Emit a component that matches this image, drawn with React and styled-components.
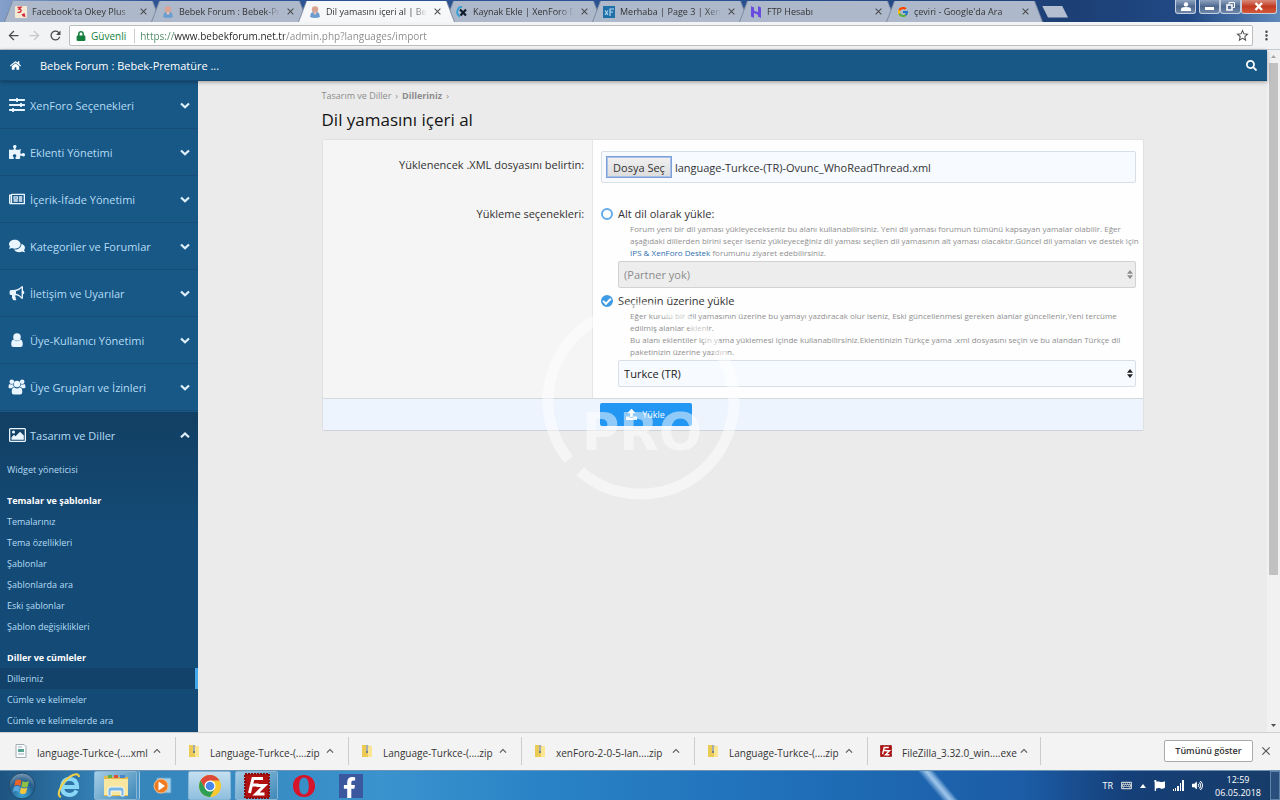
import React, { useRef } from 'react';
import styled, { createGlobalStyle, css } from 'styled-components';
import {
    FaHome, FaSearch, FaSlidersH, FaPuzzlePiece, FaRegNewspaper, FaComments,
    FaUpload, FaLock, FaFacebookF, FaVolumeUp, FaFlag, FaKeyboard,
} from 'react-icons/fa';
import { MdArrowBack, MdArrowForward, MdRefresh, MdStarBorder, MdMoreVert, MdClose, MdKeyboardArrowUp } from 'react-icons/md';
import { FcGoogle } from 'react-icons/fc';

const tabs = [
    { title: "Facebook'ta Okey Plus", icon: 'okey' },
    { title: 'Bebek Forum : Bebek-Prematüre', icon: 'baby' },
    { title: 'Dil yamasını içeri al | Bebek Forum', icon: 'baby', active: true },
    { title: 'Kaynak Ekle | XenForo Destek', icon: 'xen' },
    { title: 'Merhaba | Page 3 | XenMods', icon: 'xf' },
    { title: 'FTP Hesabı', icon: 'host' },
    { title: "çeviri - Google'da Ara", icon: 'google' },
];

const sections = [
    { title: 'XenForo Seçenekleri', icon: <FaSlidersH /> },
    { title: 'Eklenti Yönetimi', icon: <FaPuzzlePiece /> },
    { title: 'İçerik-İfade Yönetimi', icon: <FaRegNewspaper /> },
    { title: 'Kategoriler ve Forumlar', icon: <FaComments /> },
    { title: 'İletişim ve Uyarılar', icon: <BullhornIcon /> },
    { title: 'Üye-Kullanıcı Yönetimi', icon: <UserIcon /> },
    { title: 'Üye Grupları ve İzinleri', icon: <UsersIcon /> },
];

const themeLinks = ['Temalarınız', 'Tema özellikleri', 'Şablonlar', 'Şablonlarda ara', 'Eski şablonlar', 'Şablon değişiklikleri'];
const languageLinks = ['Dilleriniz', 'Cümle ve kelimeler', 'Cümle ve kelimelerde ara'];

const downloads = [
    { name: 'language-Turkce-(....xml', icon: 'xml' },
    { name: 'Language-Turkce-(....zip', icon: 'zip' },
    { name: 'Language-Turkce-(....zip', icon: 'zip' },
    { name: 'xenForo-2-0-5-lan....zip', icon: 'zip' },
    { name: 'Language-Turkce-(....zip', icon: 'zip' },
    { name: 'FileZilla_3.32.0_win....exe', icon: 'fz' },
];

const App = () => {
    return (
        <Screen>
            <GlobalStyle />
            <TabBar />
            <Toolbar />
            <Viewport>
                <Page>
                    <Header>
                        <HomeLink href="#" aria-label="Ana sayfa"><FaHome /></HomeLink>
                        <SiteLink href="#">Bebek Forum : Bebek-Prematüre ...</SiteLink>
                        <SearchButton type="button" aria-label="Ara"><FaSearch /></SearchButton>
                    </Header>
                    <PageBody>
                        <Sidebar />
                        <Content />
                    </PageBody>
                </Page>
                <Scrollbar>
                    <ScrollArrow />
                    <ScrollTrack><ScrollThumb /></ScrollTrack>
                    <ScrollArrow $down />
                </Scrollbar>
                <Watermark />
            </Viewport>
            <DownloadShelf />
            <Taskbar />
        </Screen>
    );
};

export default App;

function TabBar() {
    return (
        <StTabBar>
            {tabs.map((tab) => (
                <Tab key={tab.title} $active={tab.active}>
                    <Favicon type={tab.icon} />
                    <TabTitle>{tab.title}</TabTitle>
                    <TabClose type="button" aria-label="Sekmeyi kapat"><MdClose /></TabClose>
                </Tab>
            ))}
            <NewTab type="button" aria-label="Yeni sekme" />
            <WindowButtons>
                <WindowButton type="button" aria-label="Profil" $alone>
                    <svg width="10" height="9" viewBox="0 0 10 9" fill="#fff"><circle cx="5" cy="2.4" r="2.2" /><path d="M0 9V7.4Q0 5 5 5T10 7.4V9z" /></svg>
                </WindowButton>
                <WindowButton type="button" aria-label="Simge durumuna küçült">
                    <svg width="10" height="9" viewBox="0 0 10 9"><path d="M0 5h9v3H0z" fill="#fff" /></svg>
                </WindowButton>
                <WindowButton type="button" aria-label="Önceki boyut">
                    <svg width="10" height="9" viewBox="0 0 10 9" fill="none" stroke="#fff"><path d="M3 .5h5.5v5H7M3 2.5V.5" /><path d="M1 3h5v5H1z" strokeWidth="1.6" /></svg>
                </WindowButton>
                <WindowButton type="button" aria-label="Kapat" $close>
                    <svg width="10" height="9" viewBox="0 0 10 9" stroke="#fff" strokeWidth="2.4"><path d="M1.5 1l6.5 7M8 1L1.5 8" /></svg>
                </WindowButton>
            </WindowButtons>
        </StTabBar>
    );
}

function Toolbar() {
    return (
        <StToolbar>
            <ToolButton type="button" aria-label="Geri"><MdArrowBack /></ToolButton>
            <ToolButton type="button" aria-label="İleri" disabled><MdArrowForward /></ToolButton>
            <ToolButton type="button" aria-label="Yenile"><MdRefresh /></ToolButton>
            <AddressBar>
                <FaLock />
                <Secure>Güvenli</Secure>
                <AddressInput type="text" aria-label="Adres" defaultValue="https://www.bebekforum.net.tr/admin.php?languages/import" />
                <ToolButton type="button" aria-label="Yer işareti"><MdStarBorder /></ToolButton>
            </AddressBar>
            <ToolButton type="button" aria-label="Menü"><MdMoreVert /></ToolButton>
        </StToolbar>
    );
}

function Sidebar() {
    return (
        <StSidebar>
            {sections.map((section) => (
                <SectionButton type="button" key={section.title}>
                    <SectionIcon>{section.icon}</SectionIcon>
                    {section.title}
                    <Chevron />
                </SectionButton>
            ))}
            <OpenSection>
                <SectionButton type="button" $open>
                    <SectionIcon><PictureIcon /></SectionIcon>
                    Tasarım ve Diller
                    <Chevron up />
                </SectionButton>
                <SubLink href="#">Widget yöneticisi</SubLink>
                <SubHeading>Temalar ve şablonlar</SubHeading>
                {themeLinks.map((link) => <SubLink href="#" key={link}>{link}</SubLink>)}
                <SubHeading>Diller ve cümleler</SubHeading>
                {languageLinks.map((link, i) => <SubLink href="#" key={link} $selected={i === 0}>{link}</SubLink>)}
            </OpenSection>
        </StSidebar>
    );
}

function Content() {
    const fileRef = useRef(null);

    return (
        <Main>
            <Container>
                <Breadcrumb>
                    <a href="#">Tasarım ve Diller</a>
                    <span>›</span>
                    <a href="#"><b>Dilleriniz</b></a>
                    <span>›</span>
                </Breadcrumb>
                <Title>Dil yamasını içeri al</Title>
                <Form onSubmit={(e) => e.preventDefault()}>
                    <FormRow $first>
                        <FormLabel as="label" htmlFor="file">Yüklenencek .XML dosyasını belirtin:</FormLabel>
                        <FormField>
                            <FileBox>
                                <HiddenFile id="file" type="file" ref={fileRef} tabIndex={-1} />
                                <FileButton type="button" onClick={() => fileRef.current.click()}>Dosya Seç</FileButton>
                                language-Turkce-(TR)-Ovunc_WhoReadThread.xml
                            </FileBox>
                        </FormField>
                    </FormRow>
                    <FormRow>
                        <FormLabel>Yükleme seçenekleri:</FormLabel>
                        <FormField>
                            <Choice>
                                <Radio type="radio" name="target" />
                                Alt dil olarak yükle:
                            </Choice>
                            <Hint>
                                Forum yeni bir dil yaması yükleyecekseniz bu alanı kullanabilirsiniz. Yeni dil yaması forumun tümünü kapsayan yamalar olabilir. Eğer<br />
                                aşağıdaki dillerden birini seçer iseniz yükleyeceğiniz dil yaması seçilen dil yamasının alt yaması olacaktır.Güncel dil yamaları ve destek için<br />
                                <a href="#">IPS &amp; XenForo Destek</a> forumunu ziyaret edebilirsiniz.
                            </Hint>
                            <SelectBox $disabled>
                                <select disabled aria-label="Üst dil"><option>(Partner yok)</option></select>
                                <SelectArrows />
                            </SelectBox>
                            <Choice>
                                <Radio type="radio" name="target" defaultChecked />
                                Seçilenin üzerine yükle
                            </Choice>
                            <Hint>
                                Eğer kurulu bir dil yamasının üzerine bu yamayı yazdıracak olur iseniz, Eski güncellenmesi gereken alanlar güncellenir,Yeni tercüme<br />
                                edilmiş alanlar eklenir.<br />
                                Bu alanı eklentiler için yama yüklemesi içinde kullanabilirsiniz.Eklentinizin Türkçe yama .xml dosyasını seçin ve bu alandan Türkçe dil<br />
                                paketinizin üzerine yazdırın.
                            </Hint>
                            <SelectBox>
                                <select aria-label="Üzerine yazılacak dil"><option>Turkce (TR)</option></select>
                                <SelectArrows />
                            </SelectBox>
                        </FormField>
                    </FormRow>
                    <FormFooter>
                        <SubmitButton type="submit"><FaUpload />Yükle</SubmitButton>
                    </FormFooter>
                </Form>
            </Container>
        </Main>
    );
}

function DownloadShelf() {
    return (
        <Shelf>
            {downloads.map((file, i) => (
                <Download key={i}>
                    <FileIcon type={file.icon} />
                    <a href="#">{file.name}</a>
                    <ShelfButton type="button" aria-label="Seçenekler"><MdKeyboardArrowUp /></ShelfButton>
                </Download>
            ))}
            <ShowAll type="button">Tümünü göster</ShowAll>
            <ShelfButton type="button" aria-label="Kapat"><MdClose /></ShelfButton>
        </Shelf>
    );
}

function Taskbar() {
    return (
        <StTaskbar>
            <TaskButton type="button" aria-label="Başlat"><StartIcon /></TaskButton>
            <TaskButton type="button" aria-label="Internet Explorer"><ExplorerIcon /></TaskButton>
            <TaskButton type="button" aria-label="Dosyalar" $open $stack><FolderIcon /></TaskButton>
            <TaskButton type="button" aria-label="Media Player"><PlayerIcon /></TaskButton>
            <TaskButton type="button" aria-label="Chrome" $open $current><ChromeIcon /></TaskButton>
            <TaskButton type="button" aria-label="FileZilla" $open><FileZillaIcon size={26} /></TaskButton>
            <TaskButton type="button" aria-label="Opera"><OperaIcon /></TaskButton>
            <TaskButton type="button" aria-label="Facebook"><FacebookTile><FaFacebookF /></FacebookTile></TaskButton>
            <Tray>
                <span>TR</span>
                <FaKeyboard color="#c6cbd0" />
                <svg width="6" height="4" viewBox="0 0 6 4"><path d="M0 4L3 0l3 4z" fill="#fff" /></svg>
                <FaFlag />
                <svg width="11" height="11" viewBox="0 0 11 11" fill="#fff"><path d="M0 9h1v2H0zM2 8h1v3H2zM4 6h2v5H4zM7 3h1v8H7zM9 0h2v11H9z" /></svg>
                <FaVolumeUp />
                <Clock>12:59<br />06.05.2018</Clock>
            </Tray>
            <ShowDesktop type="button" aria-label="Masaüstünü göster" />
        </StTaskbar>
    );
}

/* icons */

function Favicon({ type }) {
    if (type === 'google') return <FcGoogle size={12} />;
    return (
        <svg width="12" height="12" viewBox="0 0 12 12">
            {type === 'okey' && <>
                <rect width="12" height="12" rx="1" fill="#f4ead3" />
                <path d="M2.500 1.500l3.500-.3-2 2q2.500 0 2 1.800T2.500 6.300" fill="none" stroke="#d3263a" strokeWidth="1.3" />
                <path d="M6.500 8.500l3-1.500 1 4-2.500-.5z" fill="#d3263a" />
            </>}
            {type === 'baby' && <>
                <circle cx="6" cy="3.500" r="3.200" fill="#d9a292" />
                <path d="M2 7q4-2.500 8 0l1 4q-5 2-10 0z" fill="#6c9dd0" />
                <circle cx="6" cy="7" r="1.600" fill="#e8bfae" />
            </>}
            {type === 'xen' && <>
                <path d="M6 .8a5.200 5.200 0 0 0-2 9.800" fill="none" stroke="#2f9fd6" strokeWidth="1.800" />
                <path d="M4 3.500l6 6M10 3.500l-5.500 6" stroke="#111c2b" strokeWidth="2.200" />
            </>}
            {type === 'xf' && <>
                <rect width="12" height="12" fill="#1f6fa8" />
                <path d="M2 4.500l3 4.500M5 4.500L2 9M7 10V3h4M7 6h3" fill="none" stroke="#b9dcf2" strokeWidth="1.100" />
            </>}
            {type === 'host' && <path d="M1 0l3 1.500v3l4 1.700V0l3 1.500V12l-3-1.500V8.800L4 7v5l-3-1.500z" fill="#6a4be0" />}
        </svg>
    );
}

function Chevron({ up }) {
    return (
        <svg width="10" height="10" viewBox="0 0 10 10" fill="none" stroke="currentColor" strokeWidth="2.200">
            <path d={up ? 'M1 7.300L5 3.500l4 3.800' : 'M1 3.500l4 3.800 4-3.800'} />
        </svg>
    );
}

function BullhornIcon() {
    return (
        <svg width="1em" height="1em" viewBox="0 0 16 16" fill="currentColor">
            <path fillRule="evenodd" d="M14 5.600V2q0-1-1-1Q9 4.800 4 5H2Q.6 5 .6 6.500v2Q.6 10 2 10h1q-.6 3 1.200 5 2 .8 3.200-.3-1.200-1-.5-2-1.200-1-.3-2.600Q10 10.600 13 14q1 0 1-1V9.300q1.300-.4 1.300-1.800T14 5.600zM12.600 12Q10 9.200 7 8.800V6.200Q10 5.700 12.600 3z" />
        </svg>
    );
}

function UserIcon() {
    return (
        <svg width="1em" height="1em" viewBox="0 0 16 16" fill="currentColor">
            <circle cx="8" cy="5" r="3.800" />
            <path d="M4.600 7.600Q2.200 8 2.200 12.500q0 2.500 2.300 2.500h7q2.300 0 2.300-2.500 0-4.500-2.400-4.900Q8 10.800 4.600 7.600z" />
        </svg>
    );
}

function UsersIcon() {
    return (
        <svg width="18" height="16" viewBox="0 0 18 16" fill="currentColor">
            <circle cx="3.800" cy="2.800" r="2.300" />
            <circle cx="14.200" cy="2.800" r="2.300" />
            <circle cx="9" cy="5" r="3.200" />
            <path d="M1.800 5Q.5 5 .5 8q0 1.300 1.300 1.300h2Q4.600 8 6 7.700 5 6.500 5.200 5.200 3.300 6 1.800 5zM16.200 5q1.300 0 1.300 3 0 1.300-1.300 1.300h-2Q13.400 8 12 7.700q1-1.200.8-2.500 1.900.8 3.400-.2z" />
            <path d="M6.300 8.200Q3.700 8.500 3.700 13q0 2.500 2.200 2.500h6.200q2.200 0 2.200-2.500 0-4.500-2.600-4.800Q9 10.700 6.300 8.200z" />
        </svg>
    );
}

function PictureIcon() {
    return (
        <svg width="17" height="14" viewBox="0 0 17 14" fill="currentColor">
            <path fillRule="evenodd" d="M1.500 0h14Q17 0 17 1.500v11q0 1.500-1.500 1.500h-14Q0 14 0 12.500v-11Q0 0 1.500 0zM1.300 1.300v11.400h14.400V1.300z" />
            <circle cx="4.500" cy="4" r="1.600" />
            <path d="M2.500 11.800V9.300L5 6.800l1.500 1.500 4.500-4.500 3.800 3.800v4.200z" />
        </svg>
    );
}

function SelectArrows() {
    return (
        <svg width="6" height="9" viewBox="0 0 6 9" fill="currentColor"><path d="M0 3.700L3 0l3 3.700zM0 5.300L3 9l3-3.700z" /></svg>
    );
}

function FileIcon({ type }) {
    if (type === 'fz') return <FileZillaIcon size={12} />;
    return (
        <svg width="12" height="14" viewBox="0 0 12 14">
            {type === 'xml' ? <>
                <path d="M1 .5h8l2 2v11H1z" fill="#fbfcfd" stroke="#a4acb4" />
                <path d="M3 5h6v3H3z" fill="#56a394" />
                <path d="M3 10h6M3 3h4" stroke="#9db0c6" />
            </> : <>
                <path d="M1 1h6l1 1.500h3V13H1z" fill="#eccb54" />
                <path d="M7 3l4-1v11H7z" fill="#fbe793" />
                <path d="M5 1h2v8H5z" fill="#77808a" />
                <path d="M5 2h2M5 4h2M5 6h2" stroke="#d4d7da" />
            </>}
        </svg>
    );
}

function FileZillaIcon({ size }) {
    return (
        <svg width={size} height={size} viewBox="0 0 26 26">
            <rect x="1" y="1" width="24" height="24" fill="#b01010" stroke="#8b0b0b" strokeWidth="2" strokeDasharray="2 1" />
            <path d="M5.500 20L9 5.500h10M7.500 12h7M12.500 12.500h8L12 21h8.500" fill="none" stroke="#fff" strokeWidth="3" />
        </svg>
    );
}

function StartIcon() {
    return (
        <svg width="28" height="28" viewBox="0 0 28 28">
            <defs>
                <radialGradient id="orb" cx=".5" cy=".8" r=".8"><stop stopColor="#3fa8d8" /><stop offset=".6" stopColor="#235d8c" /><stop offset="1" stopColor="#7f9cb4" /></radialGradient>
            </defs>
            <circle cx="14" cy="14" r="13" fill="url(#orb)" stroke="#1e486d" />
            <path d="M7.500 8.500q3-2 6 0L12.300 14q-3-2-6 0z" fill="#e8632a" />
            <path d="M14.500 9q3 2 6.500 0l-1.300 5.500q-3 2-6.300 0z" fill="#8fc045" />
            <path d="M6 15q3-2 6 0l-1.200 5q-3-2-6 0z" fill="#56a7e0" />
            <path d="M13 15.500q3 2 6.300 0L18 21q-3 2-6.300 0z" fill="#f7c63c" />
        </svg>
    );
}

function ExplorerIcon() {
    return (
        <svg width="26" height="26" viewBox="0 0 26 26" fill="none">
            <path d="M20.500 17.500q-2 4.500-7.500 4.500-7.500-1-7-8.500Q7 6 13.500 6q7.500 0 7.500 8H7" stroke="#8ad8f8" strokeWidth="4.200" />
            <path d="M5 24q-4-1-1-8Q8 6 17 2q6-2 6 2" stroke="#f1cf4a" strokeWidth="2" />
        </svg>
    );
}

function FolderIcon() {
    return (
        <svg width="26" height="24" viewBox="0 0 26 24">
            <path d="M1 4V2h8l1 1h15v19H1z" fill="#e2b94d" />
            <path d="M5 1h4v3H5z" fill="#5db04f" /><path d="M11 1h4v3h-4z" fill="#d95040" /><path d="M17 1h5v3h-5z" fill="#4b86cc" />
            <path d="M1 5h24v16H1z" fill="#f8e7a0" />
            <path d="M5 22v-6q0-3 3-3h10q3 0 3 3v6h-3v-5H8v5z" fill="#78b6e4" stroke="#f1f8fd" />
        </svg>
    );
}

function PlayerIcon() {
    return (
        <svg width="20" height="18" viewBox="0 0 20 18">
            <path d="M4 1h14v15H4z" fill="#9fd0ee" stroke="#5a9dc8" />
            <circle cx="8" cy="9" r="7" fill="#ee7b22" stroke="#f9bd85" />
            <path d="M5.500 4.500L12 9l-6.500 4.500z" fill="#fff" />
        </svg>
    );
}

function ChromeIcon() {
    return (
        <svg width="24" height="24" viewBox="0 0 24 24">
            <circle cx="12" cy="12" r="11" fill="#fbc92f" />
            <path d="M2.500 6.500A11 11 0 0 1 21.500 6.500H12L7.200 14.700z" fill="#dd4838" />
            <path d="M2.500 6.500L7.200 14.700 12 17.500l4.700-2.800L12 23A11 11 0 0 1 2.500 6.500z" fill="#2c9e55" />
            <circle cx="12" cy="12" r="5.500" fill="#fff" />
            <circle cx="12" cy="12" r="4.300" fill="#4687e8" />
        </svg>
    );
}

function OperaIcon() {
    return (
        <svg width="24" height="24" viewBox="0 0 24 24">
            <path fillRule="evenodd" d="M12 1c7 0 11 5 11 11s-4 11-11 11S1 18 1 12 5 1 12 1zm0 2.500c-3.500 0-4.800 4-4.800 8.500s1.300 8.500 4.800 8.500 4.800-4 4.800-8.500S15.500 3.500 12 3.500z" fill="#d8142a" />
        </svg>
    );
}

function Watermark() {
    return (
        <WatermarkLayer aria-hidden="true">
            <svg width="200" height="200" viewBox="0 0 200 200">
                <circle cx="100" cy="100" r="93" fill="none" stroke="#fff" strokeWidth="11" strokeDasharray="567 17.400" transform="rotate(141 100 100)" />
                <text x="101" y="149" textAnchor="middle" fontFamily="'DejaVu Sans', sans-serif" fontWeight="700" fontSize="51" fill="#fff">PRO</text>
            </svg>
        </WatermarkLayer>
    );
}

/* styles */

const GlobalStyle = createGlobalStyle`
    * {
        box-sizing: border-box;
    }

    body {
        margin: 0;
        font-family: 'Open Sans', 'Noto Sans', sans-serif;
        font-size: 11px;
    }

    button, input, select {
        font: inherit;
        color: inherit;
    }

    button {
        padding: 0;
        border: none;
        background: none;
    }

    a {
        color: inherit;
        text-decoration: none;
    }

    svg {
        flex: none;
    }
`;

const Screen = styled.div`
    display: flex;
    flex-direction: column;
    height: 100vh;
    overflow: hidden;
`;

const StTabBar = styled.div`
    display: flex;
    flex: none;
    height: 22px;
    padding: 1px 3px 0 4px;
    background: linear-gradient(90deg, #86a0cb, #2d5394 12%, #28508f 60%, #1c3f75 84%, #224a86 93%, #5f88bb);
`;

const Tab = styled.div`
    position: relative;
    z-index: ${(props) => (props.$active ? 1 : 0)};
    display: flex;
    align-items: center;
    gap: 5px;
    flex: 0 1 157px;
    min-width: 0;
    margin-right: -10px;
    padding: 0 12px 0 11px;
    font-size: 9px;
    color: #333;

    &::before,
    &::after {
        content: '';
        position: absolute;
        inset: 0;
        z-index: -2;
        background: #7d8ba3;
        clip-path: polygon(8px 0, calc(100% - 8px) 0, 100% 100%, 0 100%);
    }

    &::after {
        inset: 0 1px;
        z-index: -1;
        background: ${(props) => (props.$active ? '#f6f7f8' : '#adb9cb')};
    }
`;

const TabTitle = styled.span`
    flex: 1;
    overflow: hidden;
    white-space: nowrap;
    mask-image: linear-gradient(90deg, #000 85%, transparent);
`;

const TabClose = styled.button`
    display: flex;
    font-size: 11px;
    color: #444;
`;

const NewTab = styled.button`
    align-self: center;
    width: 26px;
    height: 12px;
    margin-left: 9px;
    background: #b3bfd0;
    clip-path: polygon(0 0, 20px 0, 100% 100%, 6px 100%);
`;

const WindowButtons = styled.div`
    display: flex;
    height: 14px;
    margin: -1px 0 0 auto;
`;

const WindowButton = styled.button`
    display: flex;
    justify-content: center;
    align-items: center;
    width: ${(props) => (props.$close ? 36 : 21)}px;
    margin-right: ${(props) => (props.$alone ? 3 : 0)}px;
    border: 1px solid #c2cfe0;
    border-top: none;
    border-radius: 0 0 3px 3px;
    background: ${(props) => (props.$close ? 'linear-gradient(#d98a7b, #c23a22 50%, #d4593a)' : 'linear-gradient(#8ea3bf, #4e688f 50%, #6d86a8)')};
`;

const StToolbar = styled.div`
    display: flex;
    align-items: center;
    flex: none;
    gap: 6px;
    height: 28px;
    padding: 0 6px;
    background: #f2f3f4;
    border-bottom: 1px solid #c4c9ce;
`;

const ToolButton = styled.button`
    display: flex;
    font-size: 15px;
    color: ${(props) => (props.disabled ? '#c8c8c8' : '#4c4c4c')};
`;

const AddressBar = styled.div`
    display: flex;
    align-items: center;
    flex: 1;
    gap: 5px;
    height: 21px;
    padding: 0 2px 0 6px;
    border: 1px solid #bcbcbc;
    border-radius: 2px;
    background: #fff;
    font-size: 10px;
    color: #15803d;
`;

const Secure = styled.span`
    padding-right: 8px;
    border-right: 1px solid #ccc;
`;

// scheme, host and path each get their own colour
const AddressInput = styled.input`
    flex: 1;
    min-width: 0;
    padding: 0;
    border: none;
    outline: none;
    color: #555;
    background: linear-gradient(90deg, #4c8a62 34px, #222 34px, #222 144px, #888 144px);
    background-clip: text;
    -webkit-text-fill-color: transparent;
`;

const Viewport = styled.div`
    position: relative;
    display: flex;
    flex: 1;
    min-height: 0;
`;

const Page = styled.div`
    display: flex;
    flex-direction: column;
    flex: 1;
    min-width: 0;
    background: #ebebeb;
`;

const Header = styled.header`
    position: relative;
    display: flex;
    align-items: center;
    flex: none;
    height: 31px;
    padding: 0 10px;
    background: #185886;
    border-bottom: 1px solid #134a72;
    box-shadow: 0 1px 4px rgba(0, 0, 0, 0.35);
    color: #fff;
`;

const HomeLink = styled.a`
    display: flex;
    margin-right: 19px;
    font-size: 11px;
`;

const SiteLink = styled.a`
    font-size: 11px;
`;

const SearchButton = styled.button`
    display: flex;
    margin-left: auto;
    font-size: 11px;
`;

const PageBody = styled.div`
    display: flex;
    flex: 1;
    min-height: 0;
`;

const StSidebar = styled.nav`
    flex: none;
    width: 198px;
    padding-top: 1px;
    overflow: hidden;
    background: #185886;
    color: #b5dcf5;
`;

const SectionButton = styled.button`
    display: flex;
    align-items: center;
    width: 100%;
    height: 47px;
    padding: 0 8px;
    border-bottom: 1px solid ${(props) => (props.$open ? 'transparent' : '#154e78')};
    font-size: 11px;
    text-align: left;

    > svg {
        margin-left: auto;
        color: #dff0fc;
    }
`;

const SectionIcon = styled.span`
    display: flex;
    justify-content: center;
    width: 18px;
    margin-right: 4px;
    font-size: 16px;
    color: #e9f5ff;
`;

const OpenSection = styled.div`
    height: 100%;
    margin-top: 1px;
    background: linear-gradient(#123f63, #144b76 120px);
`;

const SubLink = styled.a`
    display: block;
    padding: 0 7px;
    font-size: 9px;
    line-height: 21px;

    ${(props) => props.$selected && css`
        background: #12426a;
        border-right: 3px solid #47a7eb;
    `}
`;

const SubHeading = styled.h3`
    margin: 11px 0 0;
    padding: 0 7px;
    font-size: 9px;
    line-height: 20px;
    color: #fff;
`;

const Main = styled.main`
    flex: 1;
    min-width: 0;
    padding: 8px 16px;
    overflow: hidden;
`;

const Container = styled.div`
    max-width: 822px;
    margin: 0 auto;
`;

const Breadcrumb = styled.div`
    display: flex;
    gap: 4px;
    font-size: 9px;
    line-height: 14px;
    color: #8b8b8b;
`;

const Title = styled.h1`
    margin: 4px 0 6px;
    font-size: 17px;
    font-weight: 400;
    line-height: 26px;
    color: #141414;
`;

const Form = styled.form`
    border: 1px solid #dfe0e2;
    border-bottom-color: #cfd4d8;
    border-radius: 2px;
    background: #fefefe;
    color: #333;
`;

const FormRow = styled.div`
    display: flex;

    > * {
        padding-top: ${(props) => (props.$first ? 11 : 22)}px;
    }
`;

const FormLabel = styled.div`
    flex: none;
    width: 33%;
    padding-right: 8px;
    border-right: 1px solid #e6e6e6;
    background: #f5f5f5;
    line-height: 18px;
    text-align: right;

    label& {
        padding-top: 16px;
    }
`;

const FormField = styled.div`
    flex: 1;
    min-width: 0;
    padding-right: 7px;
    padding-bottom: 7px;
    padding-left: 8px;

    ${FormRow}:first-child & {
        padding-bottom: 0;
    }
`;

const FileBox = styled.div`
    display: flex;
    align-items: center;
    gap: 3px;
    height: 32px;
    padding: 0 4px;
    border: 1px solid #d8dfe6;
    border-radius: 2px;
    background: #f7fbff;
`;

const HiddenFile = styled.input`
    position: absolute;
    width: 1px;
    height: 1px;
    opacity: 0;
`;

const FileButton = styled.button`
    height: 22px;
    padding: 0 6px;
    border: 1px solid #7d9fd8;
    box-shadow: inset 0 0 0 1px #a9c1e8;
    background: linear-gradient(#f1f1f1, #dcdcdc);
`;

const Choice = styled.label`
    display: flex;
    align-items: center;
    gap: 5px;
    line-height: 18px;
`;

const Radio = styled.input`
    display: flex;
    justify-content: center;
    align-items: center;
    appearance: none;
    width: 12px;
    height: 12px;
    margin: 0;
    border: 2px solid #63ace9;
    border-radius: 50%;

    &:checked {
        background: #3f9be6;
        border-color: #3f9be6;
    }

    &:checked::before {
        content: '';
        width: 6px;
        height: 3px;
        margin-bottom: 2px;
        border: solid #fff;
        border-width: 0 0 2px 2px;
        transform: rotate(-45deg);
    }
`;

const Hint = styled.p`
    margin: 0 0 2px 29px;
    font-size: 8px;
    line-height: 12px;
    color: #8f8f8f;
    white-space: nowrap;

    a {
        color: #2f6fae;
    }
`;

const SelectBox = styled.div`
    position: relative;
    margin: 0 0 4px 17px;
    color: ${(props) => (props.$disabled ? '#8c8c8c' : '#222')};

    select {
        display: block;
        appearance: none;
        width: 100%;
        height: 27px;
        padding: 0 5px;
        border: 1px solid ${(props) => (props.$disabled ? '#d2d2d2' : '#d8dfe6')};
        border-radius: 2px;
        background: ${(props) => (props.$disabled ? '#ededed' : '#f7fbff')};
        opacity: 1;
    }

    svg {
        position: absolute;
        top: 9px;
        right: 3px;
    }
`;

const FormFooter = styled.div`
    padding: 4px 0 4px 277px;
    border-top: 1px solid #d5d9dd;
    background: #edf4fe;
`;

const SubmitButton = styled.button`
    display: flex;
    justify-content: center;
    align-items: center;
    gap: 5px;
    width: 92px;
    height: 23px;
    border-radius: 2px;
    background: #2196f3;
    font-size: 9px;
    color: #fff;

    svg {
        font-size: 11px;
    }
`;

const Scrollbar = styled.div`
    display: flex;
    flex-direction: column;
    flex: none;
    width: 13px;
    background: #f1f1f1;
`;

const ScrollArrow = styled.div`
    width: 5px;
    height: 3px;
    margin: 5px 4px;
    background: ${(props) => (props.$down ? '#505050' : '#a3a3a3')};
    clip-path: ${(props) => (props.$down ? 'polygon(0 0, 100% 0, 50% 100%)' : 'polygon(50% 0, 100% 100%, 0 100%)')};
`;

const ScrollTrack = styled.div`
    flex: 1;
    padding: 0 2px;
`;

const ScrollThumb = styled.div`
    height: 78%;
    background: #c1c1c1;
`;

// floats over the page, the form included
const WatermarkLayer = styled.div`
    position: absolute;
    top: 251px;
    left: 50%;
    display: flex;
    margin-left: -99px;
    opacity: 0.5;
    pointer-events: none;
`;

const Shelf = styled.div`
    display: flex;
    align-items: center;
    flex: none;
    height: 38px;
    padding: 0 7px 2px 3px;
    border-top: 1px solid #d0d0d0;
    background: #f3f3f3;
    color: #333;
`;

const Download = styled.div`
    display: flex;
    align-items: center;
    flex: 0 1 173px;
    min-width: 0;
    height: 28px;
    padding: 0 11px 0 12px;
    border-right: 1px solid #ccc;
    font-size: 10px;

    a {
        flex: 1;
        margin-left: 10px;
        padding-top: 4px;
        white-space: nowrap;
    }
`;

const ShelfButton = styled.button`
    display: flex;
    font-size: 14px;
    color: #555;
`;

const ShowAll = styled.button`
    width: 89px;
    height: 22px;
    margin: 0 6px 0 auto;
    border: 1px solid #aaa;
    border-radius: 2px;
    background: #fff;
    font-size: 9px;
    font-weight: 600;
`;

const StTaskbar = styled.div`
    display: flex;
    flex: none;
    height: 30px;
    border-top: 1px solid #6d93b4;
    background:
        linear-gradient(50deg, transparent 38%, rgba(190, 222, 250, 0.8) 48%, rgba(190, 222, 250, 0.6) 52%, transparent 58%) 910px 0 / 60px 30px no-repeat,
        linear-gradient(90deg, #1d5480, #3583b8 8%, #3a93cd 30%, #2a83c6 42%, #1f6fb8 62%, #1c5ca6 80%, #153f78 88%, #173c68);
`;

const TaskButton = styled.button`
    display: flex;
    justify-content: center;
    align-items: center;
    width: 43px;
    margin-right: 4px;

    ${(props) => props.$open && css`
        border: 1px solid #86b5d6;
        border-radius: 2px;
        background: ${props.$current ? 'linear-gradient(#c4dff0, #8fbfdf)' : 'linear-gradient(135deg, #a5cde6, #3e88b8)'};
    `}

    ${(props) => props.$stack && css`
        box-shadow: 2px 0 0 #4b93c2, 3px 0 0 #9cc8e3;
    `}
`;

const FacebookTile = styled.span`
    display: flex;
    justify-content: flex-end;
    align-items: flex-end;
    width: 24px;
    height: 24px;
    padding-right: 3px;
    background: #3b579d;
    font-size: 21px;
    color: #fff;
`;

const Tray = styled.div`
    display: flex;
    align-items: center;
    gap: 8px;
    margin-left: auto;
    font-size: 9px;
    color: #fff;

    > svg {
        font-size: 11px;
    }
`;

const Clock = styled.div`
    margin-left: 4px;
    line-height: 13px;
    text-align: center;
`;

const ShowDesktop = styled.button`
    width: 10px;
    margin-left: 9px;
    border: 1px solid #5d83a8;
    background: #2a4f7c;
`;
